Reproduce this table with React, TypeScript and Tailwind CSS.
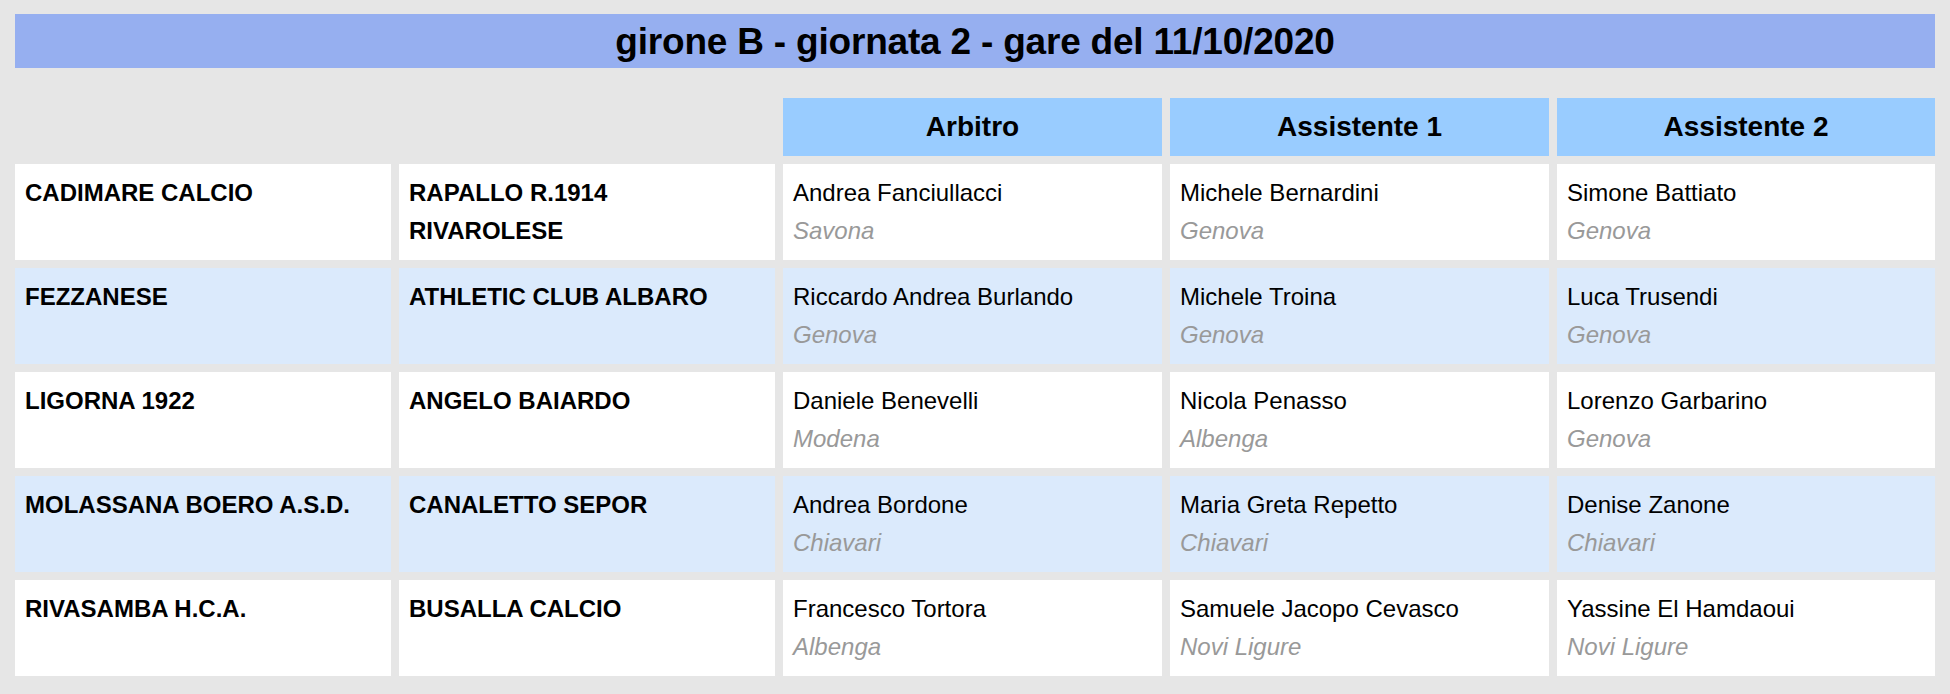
import React from "react";

type Ref = { name: string; city: string };
type Match = { home: string; away: string; refs: Ref[] };

const matches: Match[] = [
  {
    home: "CADIMARE CALCIO",
    away: "RAPALLO R.1914 RIVAROLESE",
    refs: [
      { name: "Andrea Fanciullacci", city: "Savona" },
      { name: "Michele Bernardini", city: "Genova" },
      { name: "Simone Battiato", city: "Genova" },
    ],
  },
  {
    home: "FEZZANESE",
    away: "ATHLETIC CLUB ALBARO",
    refs: [
      { name: "Riccardo Andrea Burlando", city: "Genova" },
      { name: "Michele Troina", city: "Genova" },
      { name: "Luca Trusendi", city: "Genova" },
    ],
  },
  {
    home: "LIGORNA 1922",
    away: "ANGELO BAIARDO",
    refs: [
      { name: "Daniele Benevelli", city: "Modena" },
      { name: "Nicola Penasso", city: "Albenga" },
      { name: "Lorenzo Garbarino", city: "Genova" },
    ],
  },
  {
    home: "MOLASSANA BOERO A.S.D.",
    away: "CANALETTO SEPOR",
    refs: [
      { name: "Andrea Bordone", city: "Chiavari" },
      { name: "Maria Greta Repetto", city: "Chiavari" },
      { name: "Denise Zanone", city: "Chiavari" },
    ],
  },
  {
    home: "RIVASAMBA H.C.A.",
    away: "BUSALLA CALCIO",
    refs: [
      { name: "Francesco Tortora", city: "Albenga" },
      { name: "Samuele Jacopo Cevasco", city: "Novi Ligure" },
      { name: "Yassine El Hamdaoui", city: "Novi Ligure" },
    ],
  },
];

const headers = ["Arbitro", "Assistente 1", "Assistente 2"];

export default function App() {
  return (
    <div
      className="w-full min-h-[694px] bg-[#e6e6e6] px-[15px] pt-[14px] text-black"
      style={{ fontFamily: '"Liberation Sans", Arial, Helvetica, sans-serif' }}
    >
      <div className="h-[54px] bg-[#96aff0] flex items-center justify-center">
        <h1 className="text-[37px] font-bold leading-none tracking-[-0.2px]">
          girone B - giornata 2 - gare del 11/10/2020
        </h1>
      </div>

      <div className="mt-[30px] grid grid-cols-[376px_376px_379px_379px_378px] gap-[8px]">
        <div />
        <div />
        {headers.map((h) => (
          <div
            key={h}
            className="h-[58px] bg-[#99ccff] flex items-center justify-center text-[28px] font-bold"
          >
            {h}
          </div>
        ))}

        {matches.map((m, i) => {
          const bg = i % 2 === 1 ? "bg-[#dbeafc]" : "bg-white";
          return (
            <React.Fragment key={m.home}>
              <div className={`${bg} h-[96px] px-[10px] py-[10px] text-[24px] leading-[38px] font-bold`}>
                {m.home}
              </div>
              <div className={`${bg} h-[96px] px-[10px] py-[10px] text-[24px] leading-[38px] font-bold`}>
                {m.away}
              </div>
              {m.refs.map((r) => (
                <div
                  key={r.name}
                  className={`${bg} h-[96px] px-[10px] py-[10px] text-[24px] leading-[38px]`}
                >
                  <div>{r.name}</div>
                  <div className="italic text-[#999999]">{r.city}</div>
                </div>
              ))}
            </React.Fragment>
          );
        })}
      </div>
    </div>
  );
}
